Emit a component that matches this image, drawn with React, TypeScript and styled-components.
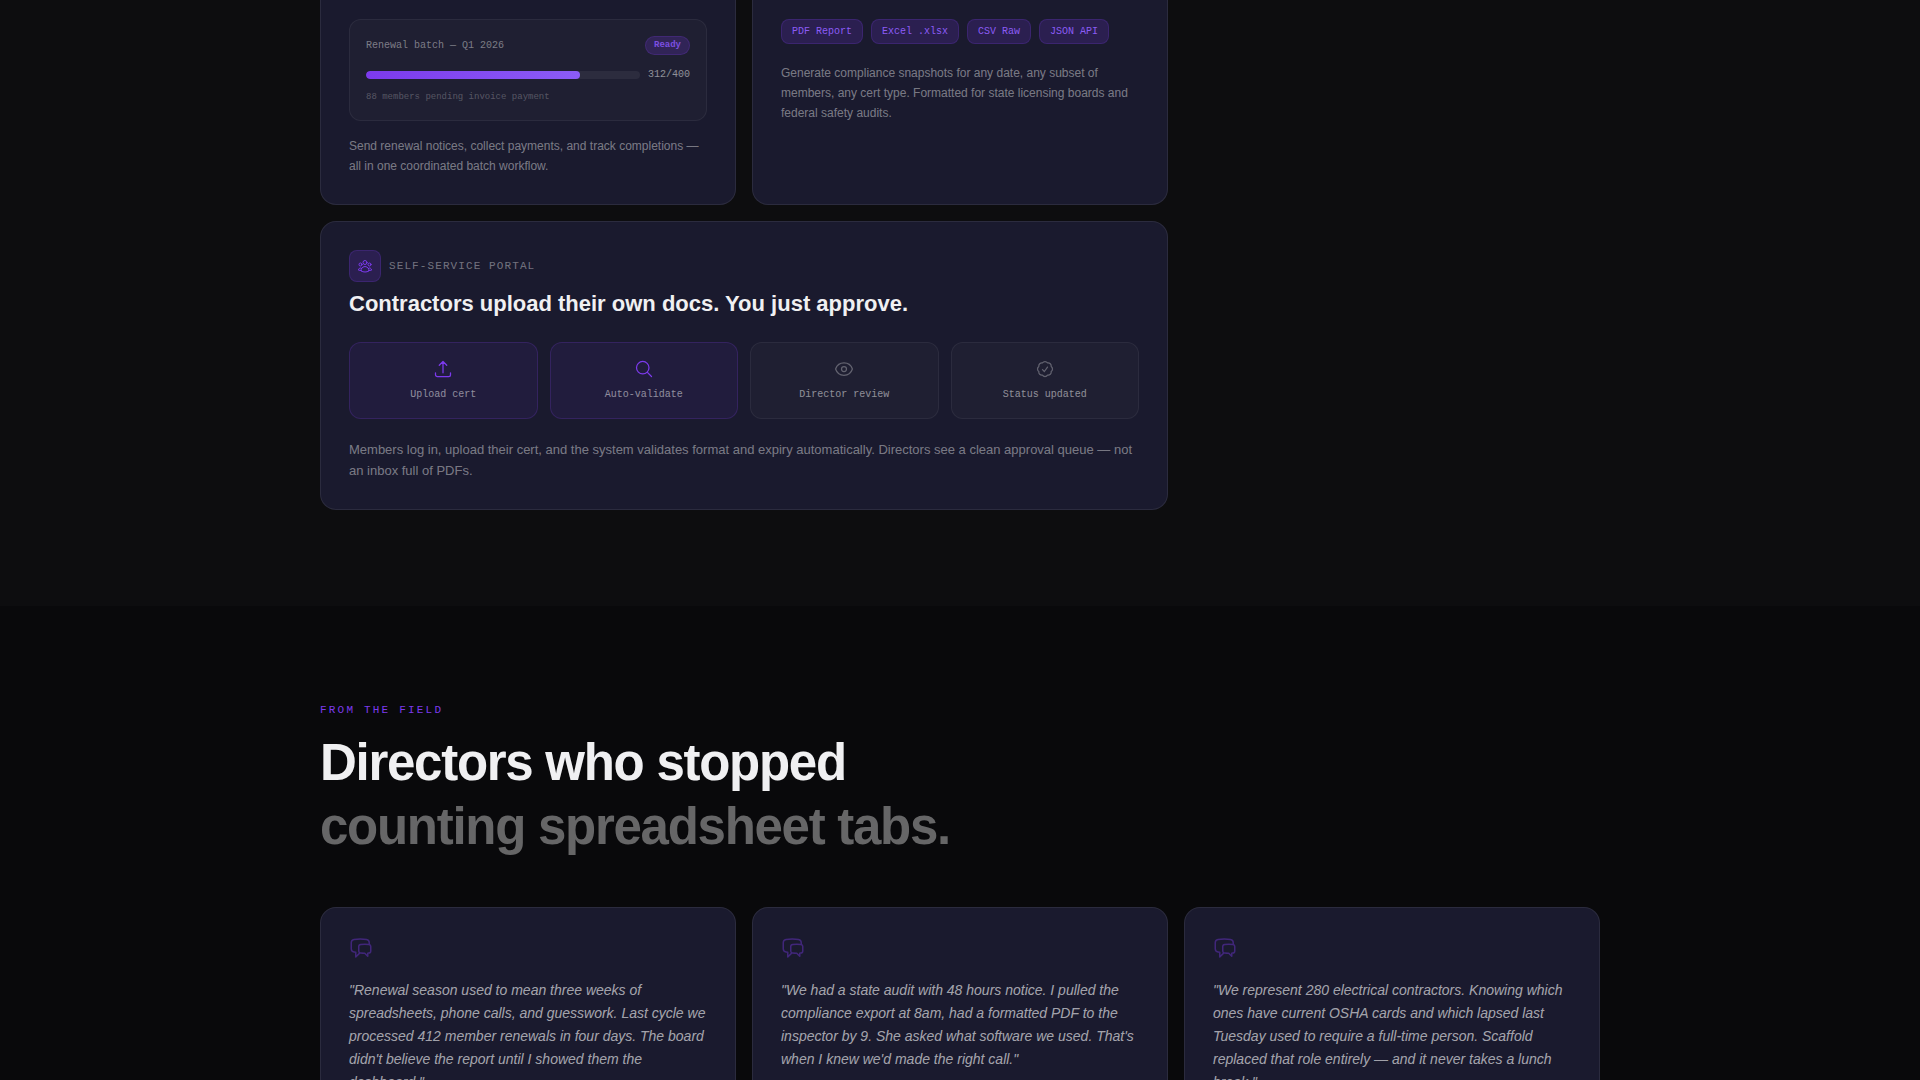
import React from "react";
import styled, { createGlobalStyle } from "styled-components";
import {
  HiOutlineArrowUpTray,
  HiOutlineChatBubbleLeftRight,
  HiOutlineCheckBadge,
  HiOutlineEye,
  HiOutlineMagnifyingGlass,
  HiOutlineUserGroup,
} from "react-icons/hi2";

const mono = `"Liberation Mono", "Courier New", monospace`;
const sans = `"Liberation Sans", Arial, sans-serif`;

const GlobalStyle = createGlobalStyle`
  *, *::before, *::after { box-sizing: border-box; }
  body {
    margin: 0;
    background: #09090b;
    color: #f0f0f2;
    font-family: ${sans};
  }
  h2, h3, p, blockquote, ol, ul { margin: 0; padding: 0; }
  ol, ul { list-style: none; }
`;

const Page = styled.main`
  height: 100vh;
  overflow: hidden;
`;

const Section = styled.section<{ $tone: "raised" | "base" }>`
  background: ${({ $tone }) => ($tone === "raised" ? "#0d0d0f" : "#09090b")};
  padding: ${({ $tone }) => ($tone === "raised" ? "0 24px 96px" : "96px 24px")};
`;

const Container = styled.div`
  max-width: 1280px;
  margin: 0 auto;
`;

const CardGrid = styled.div`
  display: grid;
  grid-template-columns: repeat(3, minmax(0, 1fr));
  gap: 16px;
`;

const Card = styled.article<{ $wide?: boolean; $continued?: boolean }>`
  grid-column: span ${({ $wide }) => ($wide ? 2 : 1)};
  padding: 28px;
  background: #1a1a2e;
  border: 1px solid rgba(255, 255, 255, 0.08);
  border-radius: 16px;
  ${({ $continued }) =>
    $continued &&
    `
    padding-top: 19px;
    border-top: 0;
    border-top-left-radius: 0;
    border-top-right-radius: 0;
  `}
`;

const BatchPanel = styled.div`
  padding: 16px;
  margin-bottom: 15px;
  background: rgba(255, 255, 255, 0.025);
  border: 1px solid rgba(255, 255, 255, 0.06);
  border-radius: 12px;
`;

const BatchHeader = styled.div`
  display: flex;
  align-items: center;
  justify-content: space-between;
  margin-bottom: 12px;
`;

const MonoText = styled.span<{ $alpha: number }>`
  font: 400 10px/15px ${mono};
  color: rgba(255, 255, 255, ${({ $alpha }) => $alpha});
`;

const Badge = styled.span`
  padding: 2px 8px;
  font: 700 9px/13px ${mono};
  color: #7c4fe0;
  background: rgba(124, 58, 237, 0.2);
  border: 1px solid rgba(124, 58, 237, 0.2);
  border-radius: 10px;
`;

const ProgressRow = styled.div`
  display: flex;
  align-items: center;
  gap: 8px;
`;

const Track = styled.div`
  flex: 1;
  height: 8px;
  overflow: hidden;
  background: rgba(255, 255, 255, 0.06);
  border-radius: 4px;
`;

const Fill = styled.div`
  height: 100%;
  background: linear-gradient(90deg, #7c3aed, #8b5cf6);
  border-radius: 4px;
`;

const BatchNote = styled.p`
  margin-top: 8px;
  font: 400 9px/14px ${mono};
  color: rgba(255, 255, 255, 0.25);
`;

const Chips = styled.ul`
  display: flex;
  flex-wrap: wrap;
  gap: 8px;
  margin-bottom: 19px;
`;

const Chip = styled.li`
  padding: 4px 10px;
  font: 400 10px/15px ${mono};
  color: #8b5cf6;
  background: rgba(124, 58, 237, 0.18);
  border: 1px solid rgba(124, 58, 237, 0.2);
  border-radius: 8px;
`;

const Description = styled.p<{ $large?: boolean }>`
  font-size: ${({ $large }) => ($large ? "13px" : "12px")};
  line-height: ${({ $large }) => ($large ? "21px" : "20px")};
  color: rgba(255, 255, 255, 0.43);
`;

const CardLabel = styled.div`
  display: flex;
  align-items: center;
  gap: 8px;
  font: 400 11px/17px ${mono};
  letter-spacing: 0.1em;
  text-transform: uppercase;
  color: rgba(255, 255, 255, 0.4);
`;

const IconTile = styled.span`
  display: grid;
  place-items: center;
  width: 32px;
  height: 32px;
  color: #7c3aed;
  background: rgba(124, 58, 237, 0.18);
  border: 1px solid rgba(124, 58, 237, 0.2);
  border-radius: 8px;
`;

const CardTitle = styled.h3`
  margin: 8px 0 24px;
  font-size: 22px;
  line-height: 28px;
  font-weight: 700;
`;

const Steps = styled.ol`
  display: grid;
  grid-template-columns: repeat(4, minmax(0, 1fr));
  gap: 12px;
  margin-bottom: 20px;
`;

const Step = styled.li<{ $active?: boolean }>`
  display: flex;
  flex-direction: column;
  align-items: center;
  gap: 8px;
  padding: 16px;
  color: ${({ $active }) => ($active ? "#7c3aed" : "rgba(255, 255, 255, 0.3)")};
  background: ${({ $active }) =>
    $active ? "rgba(124, 58, 237, 0.08)" : "rgba(255, 255, 255, 0.025)"};
  border: 1px solid
    ${({ $active }) =>
      $active ? "rgba(124, 58, 237, 0.2)" : "rgba(255, 255, 255, 0.06)"};
  border-radius: 12px;
`;

const Eyebrow = styled.p`
  margin-bottom: 12px;
  font: 400 11px/17px ${mono};
  letter-spacing: 0.2em;
  text-transform: uppercase;
  color: #7c3aed;
`;

const Heading = styled.h2`
  margin-bottom: 48px;
  font-size: 51px;
  line-height: 64px;
  font-weight: 700;
  letter-spacing: -0.025em;
  color: #f0f0f2;
`;

const Muted = styled.span`
  display: block;
  color: #666667;
`;

const QuoteIcon = styled(HiOutlineChatBubbleLeftRight)`
  display: block;
  margin-bottom: 19px;
  color: #7c3aed;
  opacity: 0.4;
`;

const Quote = styled.blockquote`
  font-size: 14px;
  line-height: 23px;
  font-style: italic;
  color: rgba(255, 255, 255, 0.62);
`;

const batch = { done: 312, total: 400 };

const formats = ["PDF Report", "Excel .xlsx", "CSV Raw", "JSON API"];

const steps = [
  { label: "Upload cert", Icon: HiOutlineArrowUpTray, active: true },
  { label: "Auto-validate", Icon: HiOutlineMagnifyingGlass, active: true },
  { label: "Director review", Icon: HiOutlineEye, active: false },
  { label: "Status updated", Icon: HiOutlineCheckBadge, active: false },
];

const quotes = [
  `"Renewal season used to mean three weeks of spreadsheets, phone calls, and guesswork. Last cycle we processed 412 member renewals in four days. The board didn't believe the report until I showed them the dashboard."`,
  `"We had a state audit with 48 hours notice. I pulled the compliance export at 8am, had a formatted PDF to the inspector by 9. She asked what software we used. That's when I knew we'd made the right call."`,
  `"We represent 280 electrical contractors. Knowing which ones have current OSHA cards and which lapsed last Tuesday used to require a full-time person. Scaffold replaced that role entirely — and it never takes a lunch break."`,
];

export default function App() {
  return (
    <>
      <GlobalStyle />
      <Page>
        <Section $tone="raised">
          <Container>
            <CardGrid>
              <Card $continued>
                <BatchPanel>
                  <BatchHeader>
                    <MonoText $alpha={0.42}>Renewal batch — Q1 2026</MonoText>
                    <Badge>Ready</Badge>
                  </BatchHeader>
                  <ProgressRow>
                    <Track>
                      <Fill style={{ width: `${(batch.done / batch.total) * 100}%` }} />
                    </Track>
                    <MonoText $alpha={0.5}>
                      {batch.done}/{batch.total}
                    </MonoText>
                  </ProgressRow>
                  <BatchNote>88 members pending invoice payment</BatchNote>
                </BatchPanel>
                <Description>
                  Send renewal notices, collect payments, and track completions — all in
                  one coordinated batch workflow.
                </Description>
              </Card>

              <Card $continued>
                <Chips>
                  {formats.map((format) => (
                    <Chip key={format}>{format}</Chip>
                  ))}
                </Chips>
                <Description>
                  Generate compliance snapshots for any date, any subset of members, any
                  cert type. Formatted for state licensing boards and federal safety
                  audits.
                </Description>
              </Card>

              <Card $wide>
                <CardLabel>
                  <IconTile>
                    <HiOutlineUserGroup size={16} />
                  </IconTile>
                  Self-Service Portal
                </CardLabel>
                <CardTitle>Contractors upload their own docs. You just approve.</CardTitle>
                <Steps>
                  {steps.map(({ label, Icon, active }) => (
                    <Step key={label} $active={active}>
                      <Icon size={20} />
                      <MonoText $alpha={0.5}>{label}</MonoText>
                    </Step>
                  ))}
                </Steps>
                <Description $large>
                  Members log in, upload their cert, and the system validates format and
                  expiry automatically. Directors see a clean approval queue — not an
                  inbox full of PDFs.
                </Description>
              </Card>
            </CardGrid>
          </Container>
        </Section>

        <Section $tone="base">
          <Container>
            <Eyebrow>From the field</Eyebrow>
            <Heading>
              Directors who stopped
              <Muted>counting spreadsheet tabs.</Muted>
            </Heading>
            <CardGrid>
              {quotes.map((quote) => (
                <Card key={quote}>
                  <QuoteIcon size={24} />
                  <Quote>{quote}</Quote>
                </Card>
              ))}
            </CardGrid>
          </Container>
        </Section>
      </Page>
    </>
  );
}
